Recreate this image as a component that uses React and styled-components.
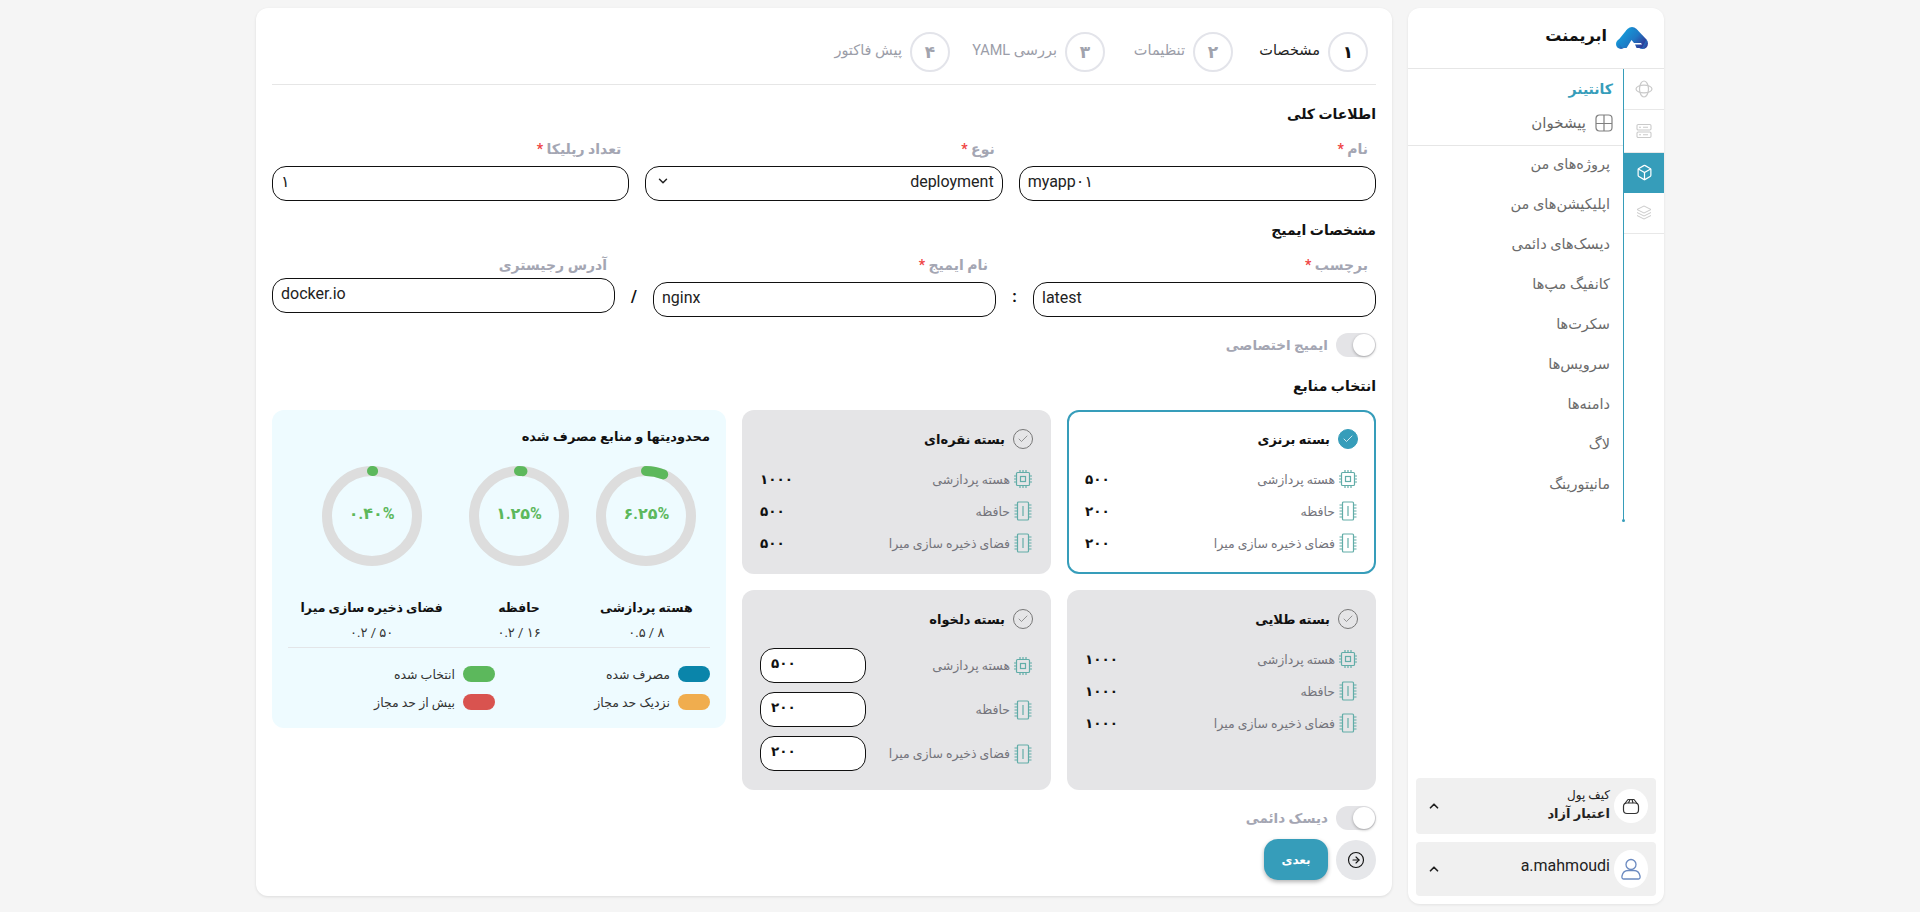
import React from "react";
import styled, { createGlobalStyle } from "styled-components";
import { Box, ChevronDown, ChevronUp, CircleArrowRight, Check } from "lucide-react";

const FONT = `Roboto, "DejaVu Sans", sans-serif`;
const BLUE = "#369dba";
const TEAL = "#62ada8";

const Global = createGlobalStyle`
  html, body { margin: 0; padding: 0; background: #f5f5f5; font-family: ${FONT}; }
  * { box-sizing: border-box; }
`;

const Page = styled.div`
  direction: rtl;
  display: flex;
  justify-content: center;
  align-items: flex-start;
  gap: 16px;
  padding-top: 8px;
  width: 1920px;
  height: 912px;
  overflow: hidden;
`;

/* ---------- sidebar ---------- */
const Sidebar = styled.aside`
  width: 256px;
  height: 896px;
  background: #fff;
  border-radius: 12px;
  box-shadow: 0 1px 3px rgba(0,0,0,.08);
  display: flex;
  flex-direction: column;
`;
const Brand = styled.div`
  height: 61px;
  border-bottom: 1px solid #e6e6e6;
  display: flex;
  align-items: center;
  gap: 9px;
  padding: 0 16px;
`;
const BrandName = styled.div`
  font-size: 16px;
  font-weight: 700;
  color: #111;
  padding-bottom: 5px;
`;
const SideBody = styled.div`
  flex: 1;
  display: flex;
  align-items: flex-start;
`;
const Rail = styled.div`
  width: 40px;
  flex: none;
`;
const RailItem = styled.div`
  height: ${p => p.$h}px;
  display: flex;
  align-items: center;
  justify-content: center;
  background: ${p => (p.$active ? BLUE : "transparent")};
  color: ${p => (p.$active ? "#fff" : "#cacaca")};
  border-bottom: 1px solid ${p => (p.$active ? "transparent" : "#e8e8e8")};
`;
const SidePanel = styled.div`
  position: relative;
  flex: 1;
  height: 451px;
  border-right: 1px solid ${BLUE};
  &::after {
    content: "";
    position: absolute;
    bottom: -2px;
    right: -2px;
    width: 3px;
    height: 3px;
    border-radius: 50%;
    background: ${BLUE};
  }
`;
const PanelHead = styled.div`
  height: 77px;
  border-bottom: 1px solid #e6e6e6;
  padding: 9px 10px 0 0;
`;
const PanelTitle = styled.div`
  font-size: 14px;
  font-weight: 700;
  color: ${BLUE};
  line-height: 22px;
`;
const DashRow = styled.div`
  margin-top: 13px;
  display: flex;
  align-items: center;
  gap: 9px;
  font-size: 15px;
  color: #666;
  line-height: 20px;
`;
const MenuItem = styled.div`
  height: 40px;
  line-height: 38px;
  padding-right: 13px;
  font-size: 14.5px;
  color: #6b6b6b;
`;
const SideFoot = styled.div`
  margin-top: auto;
  padding: 0 8px 8px;
  display: flex;
  flex-direction: column;
  gap: 8px;
`;
const FootBox = styled.div`
  height: ${p => p.$h}px;
  background: #f0f0f0;
  border-radius: 4px;
  display: flex;
  align-items: center;
  padding: 0 8px 0 11px;
  gap: 4px;
`;
const Avatar = styled.div`
  width: 34px;
  height: ${p => p.$h}px;
  border-radius: 50%;
  background: #fff;
  flex: none;
  display: flex;
  align-items: center;
  justify-content: center;
`;
const FootText = styled.div`
  flex: 1;
  display: flex;
  flex-direction: column;
  color: #222;
`;
const WalletTop = styled.span`
  font-size: 12px;
  line-height: 16px;
`;
const WalletName = styled.span`
  font-size: 13px;
  font-weight: 700;
  line-height: 22px;
`;
const UserName = styled.span`
  font-size: 16px;
  line-height: 20px;
  margin-bottom: 6px;
`;

/* ---------- main ---------- */
const Main = styled.main`
  width: 1136px;
  height: 888px;
  background: #fff;
  border-radius: 12px;
  box-shadow: 0 1px 3px rgba(0,0,0,.1);
  padding: 0 16px;
`;
const Steps = styled.div`
  display: flex;
  height: 77px;
  padding: 24px 8px 0 0;
  border-bottom: 1px solid #e6e6e6;
`;
const Step = styled.div`
  width: ${p => p.$w}px;
  flex: none;
  display: flex;
  align-items: flex-start;
  gap: 8px;
`;
const StepCircle = styled.div`
  width: 40px;
  height: 40px;
  flex: none;
  border-radius: 50%;
  border: 2px solid #e3e4ea;
  display: flex;
  align-items: center;
  justify-content: center;
  font-size: 17px;
  font-weight: 700;
  color: ${p => (p.$on ? "#111" : "#a1a3ad")};
`;
const StepLabel = styled.div`
  font-size: 14.5px;
  line-height: 38px;
  white-space: nowrap;
  color: ${p => (p.$on ? "#222" : "#9b9da8")};
`;
const SectionTitle = styled.h2`
  margin: ${p => p.$mt}px 0 0;
  font-size: 14px;
  font-weight: 700;
  line-height: 24px;
  color: #111;
`;
const FieldGrid = styled.div`
  margin-top: 12px;
  display: grid;
  grid-template-columns: repeat(3, 1fr);
  gap: 16px;
`;
const ImageRow = styled.div`
  margin-top: 12px;
  display: flex;
  align-items: flex-start;
`;
const Field = styled.div`
  flex: ${p => (p.$fixed ? "0 0 343px" : "1")};
`;
const Label = styled.label`
  display: block;
  height: 22px;
  line-height: 22px;
  margin: 0 8px ${p => p.$mb ?? 6}px 0;
  font-size: 14px;
  font-weight: 700;
  color: #a4a6b3;
`;
const Star = styled.span`
  color: #ef4444;
`;
const TextInput = styled.input`
  display: block;
  width: 100%;
  height: 35px;
  border: 1px solid #111;
  border-radius: 14px;
  padding: 0 8px 5px;
  font: 16px ${FONT};
  color: #222;
  background: #fff;
  direction: ltr;
  text-align: left;
  outline: none;
`;
const SelectBox = styled.div`
  height: 35px;
  border: 1px solid #111;
  border-radius: 14px;
  padding: 0 8px 5px 10px;
  display: flex;
  align-items: center;
  justify-content: space-between;
  font-size: 16px;
  color: #222;
`;
const Sep = styled.div`
  flex: 0 0 ${p => p.$w}px;
  margin-top: 33px;
  text-align: center;
  font-size: 16px;
  font-weight: 700;
  color: #111;
`;
const ToggleRow = styled.div`
  margin-top: ${p => p.$mt}px;
  display: flex;
  align-items: center;
  gap: 8px;
`;
const Toggle = styled.div`
  width: 40px;
  height: 24px;
  border-radius: 12px;
  background: #e4e4e7;
  padding: 1px;
`;
const Thumb = styled.div`
  width: 22px;
  height: 22px;
  border-radius: 50%;
  background: #fff;
  box-shadow: 0 1px 3px rgba(0,0,0,.3);
`;
const ToggleText = styled.span`
  font-size: 13.5px;
  font-weight: 700;
  color: #a4a6b3;
`;
const ResourceGrid = styled.div`
  margin-top: 12px;
  display: grid;
  grid-template-columns: 309px 309px 454px;
  grid-template-rows: 164px 200px;
  gap: 16px;
`;
const Card = styled.div`
  border: 2px solid ${p => (p.$sel ? BLUE : "transparent")};
  border-radius: 12px;
  background: ${p => (p.$sel ? "#fff" : "#e5e5e7")};
  padding: 17px 16px 0;
`;
const CardHead = styled.div`
  height: 20px;
  display: flex;
  align-items: center;
  gap: 8px;
  margin-bottom: ${p => p.$mb}px;
  font-size: 13px;
  font-weight: 700;
  color: #111;
`;
const CheckDot = styled.div`
  width: 20px;
  height: 20px;
  border-radius: 50%;
  display: flex;
  align-items: center;
  justify-content: center;
  background: ${p => (p.$sel ? BLUE : "transparent")};
  border: 1px solid ${p => (p.$sel ? BLUE : "#777")};
  color: ${p => (p.$sel ? "#fff" : "#777")};
`;
const ResRow = styled.div`
  height: ${p => p.$h}px;
  margin-bottom: ${p => p.$mb || 0}px;
  display: flex;
  align-items: center;
  justify-content: space-between;
`;
const ResName = styled.div`
  display: flex;
  align-items: center;
  gap: 3px;
  font-size: 12.5px;
  color: #74747c;
`;
const ResValue = styled.div`
  font-size: 13.5px;
  font-weight: 700;
  color: #111;
`;
const ResInput = styled.div`
  width: 106px;
  height: 35px;
  border: 1px solid #111;
  border-radius: 14px;
  background: #fff;
  font-size: 13.5px;
  font-weight: 700;
  color: #111;
  padding: 6px 10px 0;
  direction: ltr;
`;
const Limits = styled.div`
  grid-row: 1 / span 2;
  grid-column: 3;
  height: 318px;
  background: #eefbff;
  border-radius: 12px;
  padding: 17px 16px 0;
`;
const LimitsTitle = styled.div`
  font-size: 13px;
  font-weight: 700;
  line-height: 20px;
  color: #111;
`;
const RingRow = styled.div`
  margin-top: 19px;
  display: flex;
  justify-content: space-around;
  padding-bottom: 5px;
  border-bottom: 1px solid #e3e5e8;
`;
const RingItem = styled.div`
  width: ${p => p.$w}px;
  display: flex;
  flex-direction: column;
  align-items: center;
`;
const RingBox = styled.div`
  width: 100px;
  height: 100px;
  display: grid;
  place-items: center;
  & > * { grid-area: 1 / 1; }
`;
const RingText = styled.div`
  direction: ltr;
  font-size: 16px;
  font-weight: 700;
  color: #5cb85c;
  padding-bottom: 6px;
`;
const RingLabel = styled.div`
  margin-top: 32px;
  font-size: 12.5px;
  font-weight: 700;
  line-height: 20px;
  color: #111;
  white-space: nowrap;
`;
const RingSub = styled.div`
  margin-top: 6px;
  font-size: 13px;
  line-height: 18px;
  color: #333;
  direction: ltr;
`;
const Legend = styled.div`
  margin-top: 18px;
  display: grid;
  grid-template-columns: 215px 1fr;
  row-gap: 12px;
`;
const LegendItem = styled.div`
  display: flex;
  align-items: center;
  gap: 8px;
  height: 16px;
  font-size: 12.5px;
  color: #333;
`;
const Swatch = styled.span`
  width: 32px;
  height: 16px;
  border-radius: 8px;
  background: ${p => p.$c};
`;
const Actions = styled.div`
  margin-top: 9px;
  display: flex;
  align-items: center;
  gap: 8px;
`;
const RoundBtn = styled.div`
  width: 40px;
  height: 40px;
  border-radius: 50%;
  background: #e6e7ea;
  display: flex;
  align-items: center;
  justify-content: center;
  color: #111;
`;
const NextBtn = styled.div`
  width: 64px;
  height: 41px;
  border-radius: 14px;
  background: ${BLUE};
  box-shadow: 0 2px 4px rgba(0,0,0,.3);
  color: #fff;
  font-size: 12px;
  font-weight: 700;
  display: flex;
  align-items: center;
  justify-content: center;
`;

/* ---------- drawings ---------- */
const Logo = () => (
  <svg width="32" height="22" viewBox="0 0 32 22">
    <defs>
      <linearGradient id="lg" x1="0" y1="0.2" x2="1" y2="0.8">
        <stop offset="0" stopColor="#129fdc" />
        <stop offset="0.55" stopColor="#1f78c4" />
        <stop offset="1" stopColor="#33308f" />
      </linearGradient>
    </defs>
    <g fill="url(#lg)">
      <circle cx="5" cy="17" r="5" />
      <circle cx="16" cy="6" r="6" />
      <circle cx="26.500" cy="16.500" r="5.500" />
      <path d="M2 13.500 11 2.500H21L30.500 12.500 26 21H6z" />
    </g>
    <path fill="#fff" d="M10 22 15.500 13 18 16H25L26 17.500H19L21 22z" />
  </svg>
);
const OrbitIcon = () => (
  <svg width="18" height="18" viewBox="0 0 18 18" fill="none" stroke="currentColor" strokeWidth="1.200">
    <ellipse cx="9" cy="9" rx="8" ry="3.800" />
    <ellipse cx="9" cy="9" rx="4.500" ry="8" />
  </svg>
);
const ServerIcon = () => (
  <svg width="16" height="16" viewBox="0 0 16 16" fill="none" stroke="currentColor" strokeWidth="1.100">
    <rect x="1" y="1.500" width="14" height="5.500" rx="1.200" />
    <rect x="1" y="9" width="14" height="5.500" rx="1.200" />
    <path d="M3 4.200h2M7 4.200h5M3 11.700h2M7 11.700h5" />
  </svg>
);
const LayersIcon = () => (
  <svg width="16" height="16" viewBox="0 0 16 16" fill="none" stroke="currentColor" strokeWidth="1">
    <path d="M8 1 15 4.500 8 8 1 4.500z" />
    <path d="M1 7.500 8 11l7-3.500" />
    <path d="M1 10.500 8 14l7-3.500" />
  </svg>
);
const DashIcon = () => (
  <svg width="18" height="18" viewBox="0 0 18 18" fill="none" stroke="#808080" strokeWidth="1.200">
    <rect x="1" y="1" width="16" height="16" rx="3.500" />
    <path d="M9 1v16M1 9.500h16" />
  </svg>
);
const CpuIcon = () => (
  <svg width="20" height="20" viewBox="0 0 20 20" fill="none" stroke={TEAL} strokeWidth="1.200">
    <rect x="3.500" y="3.500" width="13" height="13" rx="1" />
    <rect x="7.500" y="7.500" width="5" height="5" />
    <path d="M7 1v2.500M10 1v2.500M13 1v2.500M7 16.500V19M10 16.500V19M13 16.500V19M1 7h2.500M1 10h2.500M1 13h2.500M16.500 7H19M16.500 10H19M16.500 13H19" />
  </svg>
);
const RamIcon = () => (
  <svg width="20" height="20" viewBox="0 0 20 20" fill="none" stroke={TEAL} strokeWidth="1.200">
    <rect x="4.500" y="1" width="11" height="18" rx="1" />
    <path d="M10 5v10M1.500 4h3M1.500 7h3M1.500 10h3M1.500 13h3M1.500 16h3M15.500 4h3M15.500 7h3M15.500 10h3M15.500 13h3M15.500 16h3" />
  </svg>
);
const WalletIcon = () => (
  <svg width="18" height="18" viewBox="0 0 18 18" fill="none" stroke="#333" strokeWidth="1.200" strokeLinejoin="round">
    <rect x="1.500" y="6" width="15" height="10.500" rx="3.500" />
    <path d="M2.500 7 6 2.500h6L15.500 7M6.500 6l1.500-3.500M11 6l-1-3.500" />
  </svg>
);
const UserIcon = () => (
  <svg width="20" height="22" viewBox="0 0 20 22" fill="none" stroke="#6b8ac0" strokeWidth="1.300">
    <circle cx="10" cy="6.500" r="5" />
    <path d="M2.500 21c-1.500 0-1.800-1.500-1.500-3 .6-3 3-5.500 6-5.500h6c3 0 5.400 2.500 6 5.500.3 1.500 0 3-1.500 3z" />
  </svg>
);

const Ring = ({ pct, text }) => (
  <RingBox>
    <svg width="100" height="100" viewBox="0 0 100 100">
      <circle cx="50" cy="50" r="45" fill="none" stroke="#dddddd" strokeWidth="10" />
      <circle
        cx="50" cy="50" r="45" fill="none" stroke="#5cb85c" strokeWidth="10" strokeLinecap="round"
        strokeDasharray={`${(pct / 100) * 282.74} 282.74`}
        transform="rotate(-90 50 50)"
      />
    </svg>
    <RingText>{text}</RingText>
  </RingBox>
);

const RES = ["هسته پردازشی", "حافظه", "فضای ذخیره سازی میرا"];
const Resource = ({ i, value }) => (
  <ResRow $h={32}>
    <ResName>{i === 0 ? <CpuIcon /> : <RamIcon />}{RES[i]}</ResName>
    <ResValue>{value}</ResValue>
  </ResRow>
);
const PlanCard = ({ title, vals, sel }) => (
  <Card $sel={sel}>
    <CardHead $mb={14}>
      <CheckDot $sel={sel}><Check size={12} strokeWidth={1.5} /></CheckDot>
      {title}
    </CardHead>
    {vals.map((v, i) => <Resource key={i} i={i} value={v} />)}
  </Card>
);

const MENU = ["پروژه‌های من", "اپلیکیشن‌های من", "دیسک‌های دائمی", "کانفیگ مپ‌ها", "سکرت‌ها", "سرویس‌ها", "دامنه‌ها", "لاگ", "مانیتورینگ"];

export default function App() {
  return (
    <>
      <Global />
      <Page>
        <Sidebar>
          <Brand><Logo /><BrandName>ابریمنت</BrandName></Brand>
          <SideBody>
            <Rail>
              <RailItem $h={41}><OrbitIcon /></RailItem>
              <RailItem $h={43}><ServerIcon /></RailItem>
              <RailItem $h={40} $active><Box size={17} strokeWidth={1.7} /></RailItem>
              <RailItem $h={41}><LayersIcon /></RailItem>
            </Rail>
            <SidePanel>
              <PanelHead>
                <PanelTitle>کانتینر</PanelTitle>
                <DashRow><DashIcon />پیشخوان</DashRow>
              </PanelHead>
              {MENU.map(m => <MenuItem key={m}>{m}</MenuItem>)}
            </SidePanel>
          </SideBody>
          <SideFoot>
            <FootBox $h={56}>
              <Avatar $h={34}><WalletIcon /></Avatar>
              <FootText>
                <WalletTop>کیف پول</WalletTop>
                <WalletName>اعتبار آزاد</WalletName>
              </FootText>
              <ChevronUp size={14} strokeWidth={3} color="#222" />
            </FootBox>
            <FootBox $h={54}>
              <Avatar $h={38}><UserIcon /></Avatar>
              <FootText><UserName>a.mahmoudi</UserName></FootText>
              <ChevronUp size={14} strokeWidth={3} color="#222" />
            </FootBox>
          </SideFoot>
        </Sidebar>

        <Main>
          <Steps>
            <Step $w={135}><StepCircle $on>۱</StepCircle><StepLabel $on>مشخصات</StepLabel></Step>
            <Step $w={128}><StepCircle>۲</StepCircle><StepLabel>تنظیمات</StepLabel></Step>
            <Step $w={155}><StepCircle>۳</StepCircle><StepLabel>بررسی YAML</StepLabel></Step>
            <Step $w={140}><StepCircle>۴</StepCircle><StepLabel>پیش فاکتور</StepLabel></Step>
          </Steps>

          <SectionTitle $mt={17}>اطلاعات کلی</SectionTitle>
          <FieldGrid>
            <Field>
              <Label>نام <Star>*</Star></Label>
              <TextInput readOnly value="myapp۰۱" />
            </Field>
            <Field>
              <Label>نوع <Star>*</Star></Label>
              <SelectBox>
                <span>deployment</span>
                <ChevronDown size={14} strokeWidth={2.5} color="#222" />
              </SelectBox>
            </Field>
            <Field>
              <Label>تعداد رپلیکا <Star>*</Star></Label>
              <TextInput readOnly value="۱" />
            </Field>
          </FieldGrid>

          <SectionTitle $mt={17}>مشخصات ایمیج</SectionTitle>
          <ImageRow>
            <Field $fixed>
              <Label>برچسب <Star>*</Star></Label>
              <TextInput readOnly value="latest" />
            </Field>
            <Sep $w={37}>:</Sep>
            <Field $fixed>
              <Label>نام ایمیج <Star>*</Star></Label>
              <TextInput readOnly value="nginx" />
            </Field>
            <Sep $w={38}>/</Sep>
            <Field $fixed>
              <Label $mb={2}>آدرس رجیستری</Label>
              <TextInput readOnly value="docker.io" />
            </Field>
          </ImageRow>

          <ToggleRow $mt={16}>
            <Toggle><Thumb /></Toggle>
            <ToggleText>ایمیج اختصاصی</ToggleText>
          </ToggleRow>

          <SectionTitle $mt={17}>انتخاب منابع</SectionTitle>
          <ResourceGrid>
            <PlanCard sel title="بسته برنزی" vals={["۵۰۰", "۲۰۰", "۲۰۰"]} />
            <PlanCard title="بسته نقره‌ای" vals={["۱۰۰۰", "۵۰۰", "۵۰۰"]} />
            <Limits>
              <LimitsTitle>محدودیتها و منابع مصرف شده</LimitsTitle>
              <RingRow>
                <RingItem $w={100}>
                  <Ring pct={6.25} text="۶.۲۵%" />
                  <RingLabel>هسته پردازشی</RingLabel>
                  <RingSub>۰.۵ / ۸</RingSub>
                </RingItem>
                <RingItem $w={100}>
                  <Ring pct={1.25} text="۱.۲۵%" />
                  <RingLabel>حافظه</RingLabel>
                  <RingSub>۰.۲ / ۱۶</RingSub>
                </RingItem>
                <RingItem $w={140}>
                  <Ring pct={0.4} text="۰.۴۰%" />
                  <RingLabel>فضای ذخیره سازی میرا</RingLabel>
                  <RingSub>۰.۲ / ۵۰</RingSub>
                </RingItem>
              </RingRow>
              <Legend>
                <LegendItem><Swatch $c="#0a85aa" />مصرف شده</LegendItem>
                <LegendItem><Swatch $c="#5cb85c" />انتخاب شده</LegendItem>
                <LegendItem><Swatch $c="#f0ad4e" />نزدیک حد مجاز</LegendItem>
                <LegendItem><Swatch $c="#d9534f" />بیش از حد مجاز</LegendItem>
              </Legend>
            </Limits>
            <PlanCard title="بسته طلایی" vals={["۱۰۰۰", "۱۰۰۰", "۱۰۰۰"]} />
            <Card>
              <CardHead $mb={19}>
                <CheckDot><Check size={12} strokeWidth={1.5} /></CheckDot>
                بسته دلخواه
              </CardHead>
              {["۵۰۰", "۲۰۰", "۲۰۰"].map((v, i) => (
                <ResRow key={i} $h={35} $mb={9}>
                  <ResName>{i === 0 ? <CpuIcon /> : <RamIcon />}{RES[i]}</ResName>
                  <ResInput>{v}</ResInput>
                </ResRow>
              ))}
            </Card>
          </ResourceGrid>

          <ToggleRow $mt={16}>
            <Toggle><Thumb /></Toggle>
            <ToggleText>دیسک دائمی</ToggleText>
          </ToggleRow>
          <Actions>
            <RoundBtn><CircleArrowRight size={18} strokeWidth={1.5} /></RoundBtn>
            <NextBtn>بعدی</NextBtn>
          </Actions>
        </Main>
      </Page>
    </>
  );
}
